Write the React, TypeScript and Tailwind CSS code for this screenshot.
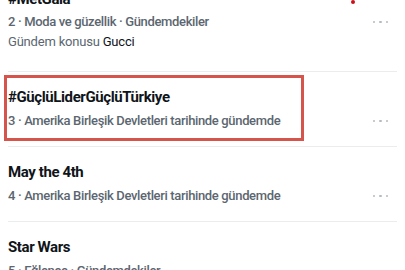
import React from "react";

const Dots = () => (
  <div className="flex items-center gap-[4px] pr-[9px]">
    <span className="w-[2.5px] h-[2.5px] rounded-full bg-[#b3bbc1]" />
    <span className="w-[2.5px] h-[2.5px] rounded-full bg-[#b3bbc1]" />
    <span className="w-[2.5px] h-[2.5px] rounded-full bg-[#b3bbc1]" />
  </div>
);

const Sub = ({ children }: { children: React.ReactNode }) => (
  <div className="flex items-center justify-between">
    <div className="text-[13px] leading-[20px] font-medium text-[#5b6670] tracking-[-0.35px]">{children}</div>
    <Dots />
  </div>
);

const Title = ({ children }: { children: React.ReactNode }) => (
  <div className="text-[15px] leading-[22px] font-bold text-[#0f1419] tracking-[-0.4px]">{children}</div>
);

export default function App() {
  return (
    <div
      className="w-[405px] h-[270px] overflow-hidden bg-white relative"
      style={{ fontFamily: "Roboto, 'Noto Sans', sans-serif" }}
    >
      <span className="absolute left-[351px] top-[0px] w-[4px] h-[4px] rounded-full bg-[#c8101a]" />
      <div className="mt-[-12px]">
        <div className="px-2 pb-[19px]">
          <Title>#MetGala</Title>
          <div className="mt-[2px]">
            <Sub>2 · Moda ve güzellik · Gündemdekiler</Sub>
          </div>
          <div className="text-[13px] leading-[20px] text-[#5b6670] tracking-[-0.2px]">
            Gündem konusu <span className="text-[#0f1419]">Gucci</span>
          </div>
        </div>
        <div className="mx-2 h-px bg-[#e9edef]" />
        <div className="relative px-2 pt-[14px] pb-[15px]">
          <div className="absolute left-[4px] top-[3px] w-[300px] h-[66px] border-[3px] border-[#d5554c]" />
          <Title>#GüçlüLiderGüçlüTürkiye</Title>
          <div className="mt-[3px]">
            <Sub>3 · Amerika Birleşik Devletleri tarihinde gündemde</Sub>
          </div>
        </div>
        <div className="mx-2 h-px bg-[#e9edef]" />
        <div className="px-2 pt-[14px] pb-[15px]">
          <Title>May the 4th</Title>
          <div className="mt-[3px]">
            <Sub>4 · Amerika Birleşik Devletleri tarihinde gündemde</Sub>
          </div>
        </div>
        <div className="mx-2 h-px bg-[#e9edef]" />
        <div className="px-2 pt-[14px] pb-[15px]">
          <Title>Star Wars</Title>
          <div className="mt-[3px]">
            <Sub>5 · Eğlence · Gündemdekiler</Sub>
          </div>
        </div>
      </div>
    </div>
  );
}
